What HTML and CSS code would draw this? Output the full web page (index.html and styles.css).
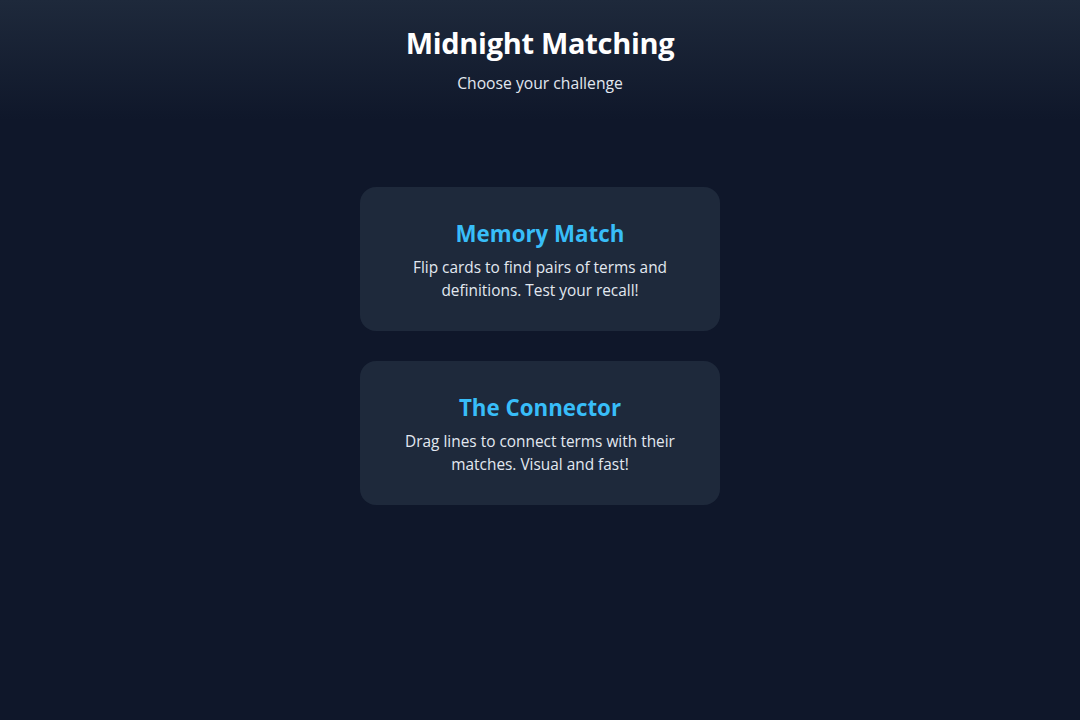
FILE: index.html
```html
<!DOCTYPE html>
<html lang="en">
<head>
<meta charset="utf-8">
<title>Midnight Matching</title>
<link rel="stylesheet" href="styles.css">
</head>
<body>
<header class="hero">
  <h1 class="hero-title">Midnight Matching</h1>
  <p class="hero-sub">Choose your challenge</p>
</header>
<main class="modes">
  <section class="card">
    <h2 class="card-title">Memory Match</h2>
    <p class="card-text">Flip cards to find pairs of terms and definitions. Test your recall!</p>
  </section>
  <section class="card">
    <h2 class="card-title">The Connector</h2>
    <p class="card-text">Drag lines to connect terms with their matches. Visual and fast!</p>
  </section>
</main>
</body>
</html>
```
FILE: styles.css
```css
* { box-sizing: border-box; }
html, body { margin: 0; padding: 0; }
body {
  background: #0f172a;
  color: #f1f5f9;
  font-family: "Open Sans", "Noto Sans", sans-serif;
  min-height: 720px;
}
.hero {
  background: linear-gradient(to bottom, #1e293b 0%, #0f172a 100%);
  height: 120px;
  padding-top: 24px;
  text-align: center;
}
.hero-title {
  margin: 0;
  font-size: 29px;
  font-weight: 700;
  color: #ffffff;
  line-height: 38px;
  letter-spacing: -0.3px;
}
.hero-sub {
  margin: 11px 0 0;
  font-size: 15.7px;
  line-height: 20px;
  color: #e2e8f0;
}
.modes {
  display: flex;
  flex-direction: column;
  align-items: center;
  gap: 30px;
  padding-top: 67px;
}
.card {
  width: 360px;
  height: 144px;
  background: #1e293b;
  border-radius: 16px;
  padding: 32px 20px 0;
  text-align: center;
}
.card-title {
  margin: 0;
  font-size: 22.3px;
  line-height: 30px;
  font-weight: 700;
  color: #38bdf8;
}
.card-text {
  margin: 7px 0 0;
  font-size: 15.4px;
  line-height: 23px;
  color: #e2e8f0;
}
```
